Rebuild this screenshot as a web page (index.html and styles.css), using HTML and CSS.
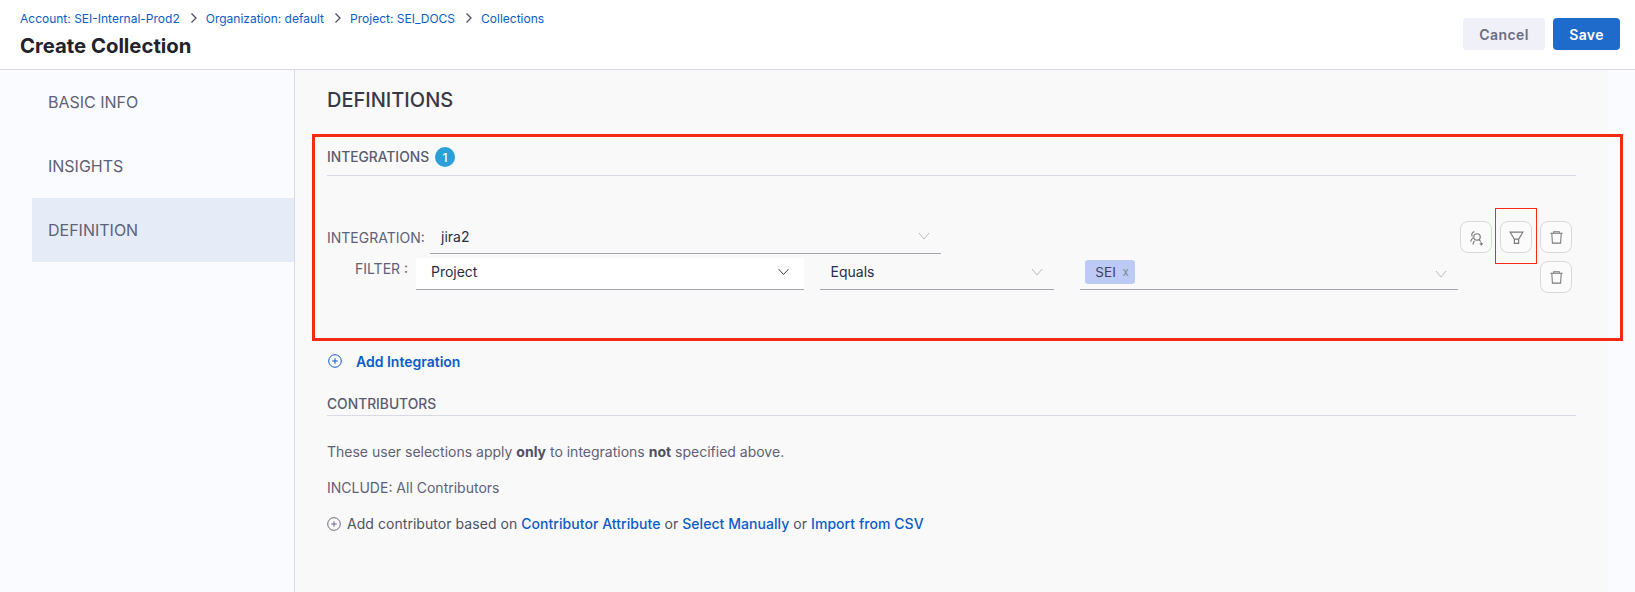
FILE: index.html
```html
<!DOCTYPE html>
<html lang="en">
<head>
<meta charset="utf-8">
<title>Create Collection</title>
<link rel="stylesheet" href="styles.css">
</head>
<body>
<header class="top">
  <div class="top-left">
    <nav class="crumbs">
      <a>Account: SEI-Internal-Prod2</a>
      <svg class="sep" viewBox="0 0 8 12"><path d="M1.5 1.5 6 6l-4.500 4.500"/></svg>
      <a>Organization: default</a>
      <svg class="sep" viewBox="0 0 8 12"><path d="M1.5 1.5 6 6l-4.500 4.500"/></svg>
      <a>Project: SEI_DOCS</a>
      <svg class="sep" viewBox="0 0 8 12"><path d="M1.500 1.500 6 6l-4.500 4.500"/></svg>
      <a>Collections</a>
    </nav>
    <h1 class="title">Create Collection</h1>
  </div>
  <div class="top-actions">
    <button class="btn btn-cancel">Cancel</button>
    <button class="btn btn-save">Save</button>
  </div>
</header>
<div class="main">
  <aside class="side">
    <div class="side-item">BASIC INFO</div>
    <div class="side-item">INSIGHTS</div>
    <div class="side-item active">DEFINITION</div>
  </aside>
  <main class="content">
    <h2 class="heading">DEFINITIONS</h2>
    <div class="section-head integrations-head">
      <span>INTEGRATIONS</span><span class="badge">1</span>
    </div>
    <div class="block">
      <div class="fields">
        <div class="row-int">
          <span class="lbl">INTEGRATION:</span>
          <div class="select sel-int"><span>jira2</span>
            <svg class="chev light" viewBox="0 0 12 8"><path d="M1 1l5 6 5-6"/></svg></div>
        </div>
        <div class="row-filter">
          <span class="lbl lbl-filter">FILTER :</span>
          <div class="select sel-project"><span>Project</span>
            <svg class="chev dark" viewBox="0 0 12 8"><path d="M1 1l5 5.500 5-5.500"/></svg></div>
          <div class="select sel-equals"><span>Equals</span>
            <svg class="chev light" viewBox="0 0 12 8"><path d="M1 1l5 6 5-6"/></svg></div>
          <div class="select sel-value"><span class="tag">SEI <i class="tag-x">x</i></span>
            <svg class="chev light" viewBox="0 0 12 8"><path d="M1 1l5 6 5-6"/></svg></div>
        </div>
      </div>
      <div class="actions">
        <button class="icon-btn"><svg class="ico-user" viewBox="0 0 16 16"><circle cx="8.500" cy="7.500" r="3"/><path d="M6 2.500a3 3 0 0 0-2 4.500M2.500 12c.3-2 1.200-3 2.500-3.800M10.500 10l1.500 2M4.500 14.500 6 11"/><path d="M12.500 12.500v3M11 14h3"/></svg></button>
        <button class="icon-btn"><svg class="ico-filter" viewBox="0 0 16 16"><path d="M2 3h12l-4 6.500v4H6v-4zM6 9.500h4"/></svg></button>
        <button class="icon-btn"><svg class="ico-trash" viewBox="0 0 16 16"><path d="M1.500 3.500h13M3 3.500l.6 10.500h8.800L13 3.500M5 3.500V1.800h6v1.700"/></svg></button>
        <button class="icon-btn second"><svg class="ico-trash" viewBox="0 0 16 16"><path d="M1.500 3.500h13M3 3.500l.6 10.500h8.800L13 3.500M5 3.500V1.800h6v1.700"/></svg></button>
      </div>
    </div>
    <a class="add-int">
      <svg class="plus plus-blue" viewBox="0 0 14 14"><circle cx="7" cy="7" r="6.300"/><path d="M7 4.200v5.600M4.200 7h5.600"/></svg>
      <span>Add Integration</span>
    </a>
    <div class="section-head contributors-head"><span>CONTRIBUTORS</span></div>
    <p class="line line-first">These user selections apply <b>only</b> to integrations <b>not</b> specified above.</p>
    <p class="line">INCLUDE: All Contributors</p>
    <p class="line line-add">
      <svg class="plus plus-grey" viewBox="0 0 14 14"><circle cx="7" cy="7" r="6.300"/><path d="M7 4.200v5.600M4.200 7h5.600"/></svg>
      <span class="add-text">Add contributor based on <a class="lnk">Contributor Attribute</a> or <a class="lnk">Select Manually</a> or <a class="lnk">Import from CSV</a></span>
    </p>
  </main>
  <div class="strip"></div>
</div>
<div class="mark mark-big"></div>
<div class="mark mark-small"></div>
</body>
</html>
```
FILE: styles.css
```css
* { box-sizing: border-box; }
html, body { margin: 0; padding: 0; }
body {
  width: 1635px;
  height: 592px;
  overflow: hidden;
  position: relative;
  background: #fafbff;
  font-family: Inter, "Liberation Sans", sans-serif;
  color: #4f5162;
}
.top {
  height: 70px;
  background: #fff;
  border-bottom: 1px solid #d9dae5;
  display: flex;
  justify-content: space-between;
  padding: 0 15px 0 20px;
}
.crumbs {
  display: flex;
  align-items: center;
  height: 16px;
  margin-top: 10px;
  font-size: 12px;
  color: #0b5cc7;
}
.sep { width: 8px; height: 12px; margin: 0 8px 0 10px; fill: none; stroke: #4f5162; stroke-width: 1.300; }
.title { margin: 7px 0 0; font-size: 20.300px; line-height: 26px; font-weight: 700; color: #22222a; }
.top-actions { display: flex; gap: 8px; padding-top: 18px; }
.btn {
  height: 32px;
  border: 0;
  border-radius: 4px;
  font-family: inherit;
  font-size: 14px;
  font-weight: 600;
  letter-spacing: .4px;
}
.btn-cancel { width: 82px; background: #f0f0f8; color: #6b6d85; }
.btn-save { width: 67px; background: #1f6bcc; color: #fff; }
.main { display: flex; height: 522px; }
.side { width: 295px; flex: none; border-right: 1px solid #d9dae5; padding-left: 32px; background: #fafbff; }
.side-item { height: 64px; line-height: 64px; padding-left: 16px; font-size: 16px; color: #5f6176; }
.side-item.active { background: #e6ebf8; }
.content { width: 1313px; flex: none; background: #f9f9f9; padding: 0 32px; }
.strip { flex: 1; }
.heading { margin: 17px 0 0; font-size: 20px; line-height: 26px; font-weight: 500; color: #383946; }
.section-head {
  display: flex;
  align-items: center;
  gap: 6px;
  font-size: 13.800px;
  font-weight: 500;
  color: #5a5c70;
  border-bottom: 1px solid #d9dae5;
}
.integrations-head { margin-top: 30px; height: 33px; padding-bottom: 4px; }
.badge {
  width: 20px;
  height: 20px;
  border-radius: 50%;
  background: #2a9fd8;
  color: #fff;
  font-size: 12px;
  display: flex;
  align-items: center;
  justify-content: center;
}
.block { display: flex; justify-content: space-between; height: 151px; padding: 45px 4px 0 0; }
.fields { width: 1131px; padding-top: 1px; }
.row-int { display: flex; align-items: flex-end; height: 32px; }
.lbl { font-size: 14px; color: #5f6176; }
.row-int .lbl { width: 103px; padding-bottom: 8px; }
.select {
  display: flex;
  align-items: center;
  justify-content: space-between;
  border-bottom: 1px solid #a5a6ad;
  font-size: 14px;
  color: #2a2d48;
}
.sel-int { width: 511px; height: 32px; padding: 0 11px 3px; }
.row-filter { display: flex; margin-top: 4px; }
.lbl-filter { width: 89px; padding: 2px 0 0 28px; }
.sel-project { width: 388px; height: 32px; padding: 0 14px 4px 15px; background: #fff; border-radius: 2px 2px 0 0; }
.sel-equals { width: 235px; height: 32px; margin-left: 16px; padding: 0 11px 4px; }
.sel-value { width: 378px; height: 32px; margin-left: 26px; padding: 0 11px 0 5px; }
.chev { width: 12px; height: 8px; fill: none; }
.chev.light { stroke: #b9bac2; stroke-width: 1; }
.chev.dark { stroke: #3c3e50; stroke-width: 1; width: 13px; }
.tag {
  display: flex;
  align-items: center;
  gap: 7px;
  height: 24px;
  padding: 0 6px 0 10px;
  background: #bccaf5;
  border-radius: 3px;
  font-size: 13.500px;
  color: #3e4060;
  margin-bottom: 4px;
}
.tag-x { font-style: normal; font-size: 11px; color: #7f8296; }
.actions { display: grid; grid-template-columns: repeat(3, 32px); column-gap: 8px; row-gap: 8px; align-content: start; }
.icon-btn {
  width: 32px;
  height: 32px;
  padding: 0;
  border: 1px solid #d9d9d9;
  border-radius: 8px;
  background: #fbfbfb;
  display: flex;
  align-items: center;
  justify-content: center;
}
.icon-btn svg { fill: none; stroke: #7a7a7a; stroke-width: 1.100; }
.ico-user { width: 17px; height: 17px; }
.ico-filter { width: 17px; height: 17px; }
.ico-trash { width: 15px; height: 15px; }
.icon-btn.second { grid-column: 3; }
.add-int {
  display: flex;
  align-items: center;
  gap: 14px;
  height: 20px;
  margin-top: 24px;
  padding-left: 1px;
  font-size: 14px;
  font-weight: 600;
  color: #0b5cc7;
}
.plus { width: 14px; height: 14px; fill: none; stroke-width: 1; flex: none; }
.plus-blue { stroke: #0b5cc7; }
.plus-grey { stroke: #6b6d85; }
.contributors-head { margin-top: 25px; height: 20px; padding-bottom: 4px; }
.line { margin: 18px 0 0; height: 18px; line-height: 18px; font-size: 14px; color: #5f6176; }
.line-first { margin-top: 27px; }
.line b { font-weight: 700; color: #4f5162; }
.line-add { display: flex; align-items: center; gap: 6px; color: #4f5162; }
.add-text { letter-spacing: .05px; }
.lnk { color: #0b5cc7; font-weight: 500; }
.mark { position: absolute; }
.mark-big { left: 312px; top: 134px; width: 1311px; height: 207px; border: 3px solid #f42a14; }
.mark-small { left: 1495px; top: 208px; width: 42px; height: 56px; border: 1px solid #f42a14; }
```
